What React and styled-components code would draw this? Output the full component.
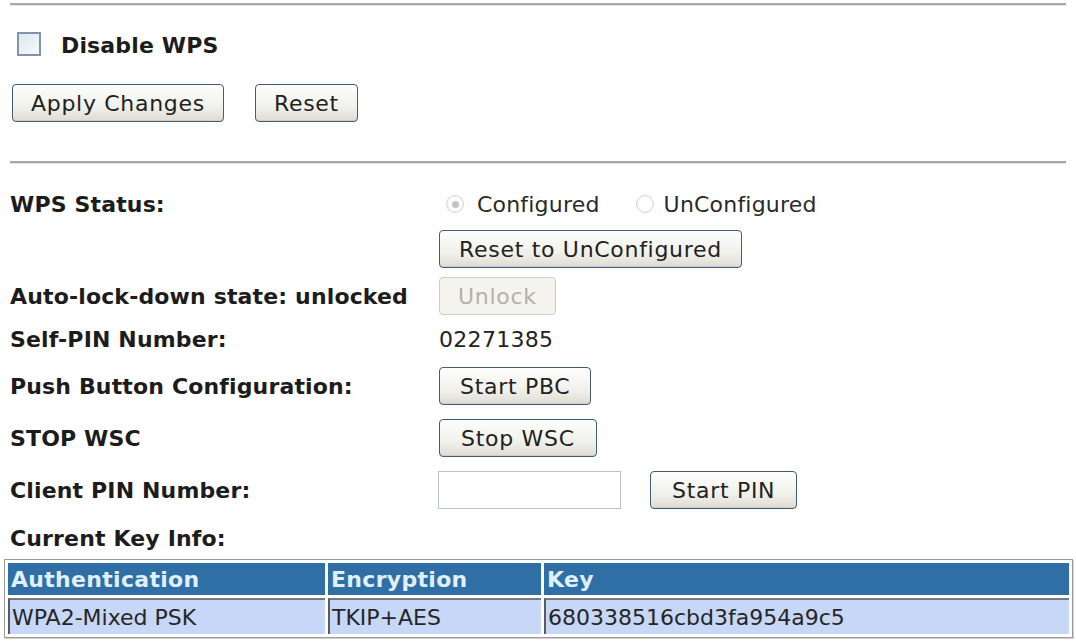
import React from "react";
import styled, { createGlobalStyle, css } from "styled-components";

const GlobalStyle = createGlobalStyle`
  html, body {
    margin: 0;
    padding: 0;
    background: #ffffff;
  }
  body {
    font-family: "DejaVu Sans", Verdana, sans-serif;
    color: #1e1e1e;
  }
`;

const Page = styled.div`
  width: 1076px;
  height: 643px;
  padding: 3px 4px 0 4px;
  box-sizing: border-box;
  overflow: hidden;
`;

const Rule = styled.div`
  height: 2px;
  margin: 0 6px;
  background: #a8a8a8;
  border-bottom: 1px solid #e2e2e2;
  margin-top: ${(props) => props.$top || 0}px;
`;

const CheckRow = styled.div`
  display: flex;
  align-items: center;
  height: 78px;
  padding-left: 13px;
  gap: 20px;
`;

const CheckBox = styled.span`
  width: 20px;
  height: 20px;
  border: 2px solid #7f93ad;
  background: linear-gradient(135deg, #dfe6ee, #f7f9fb);
  box-sizing: content-box;
  margin-top: -2px;
`;

const BoldText = styled.span`
  font-weight: bold;
  font-size: 22px;
  letter-spacing: 0.15px;
  color: #1c1c1c;
  white-space: nowrap;
`;

const ButtonRow = styled.div`
  display: flex;
  align-items: center;
  gap: 31px;
  padding-left: 8px;
  height: 38px;
`;

const Button = styled.button`
  height: 38px;
  padding: 0 ${(props) => props.$pad || 18}px;
  font-family: "DejaVu Sans", Verdana, sans-serif;
  font-size: 22px;
  letter-spacing: 0.7px;
  color: #222;
  border: 1.5px solid #445c78;
  border-radius: 4px;
  background: linear-gradient(#fdfdfb 0%, #f1f1ec 60%, #dedcd3 100%);
  box-shadow: inset 0 -1px 0 #cfcdc4;
  white-space: nowrap;
  cursor: pointer;
  ${(props) =>
    props.disabled &&
    css`
      color: #b4b1a6;
      border-color: #cfcdc2;
      background: #f4f3ee;
      box-shadow: none;
      cursor: default;
    `}
`;

const Form = styled.div`
  display: flex;
  flex-direction: column;
  margin-top: 19px;
  padding-left: 6px;
`;

const Row = styled.div`
  display: grid;
  grid-template-columns: 429px 1fr;
  align-items: center;
  height: ${(props) => props.$h}px;
`;

const Value = styled.div`
  display: flex;
  align-items: center;
  font-size: 22px;
  letter-spacing: 0.3px;
  color: #222;
`;

const RadioLabel = styled.label`
  display: flex;
  align-items: center;
  gap: ${(props) => props.$gap || 12}px;
  font-size: 22px;
  letter-spacing: 0.2px;
  color: #2a2a2a;
  margin-left: ${(props) => props.$left || 0}px;
`;

const Radio = styled.span`
  width: 16px;
  height: 16px;
  border-radius: 50%;
  border: 1px solid #d4d4d4;
  background: radial-gradient(circle, #ffffff 40%, #eeeeee 100%);
  display: flex;
  align-items: center;
  justify-content: center;
  &::after {
    content: "";
    display: ${(props) => (props.$checked ? "block" : "none")};
    width: 7px;
    height: 7px;
    border-radius: 50%;
    background: #c4c4c4;
  }
`;

const PinInput = styled.input`
  width: 183px;
  height: 38px;
  box-sizing: border-box;
  border: 1px solid #b9c2cf;
  background: #fff;
  margin-left: -1px;
  margin-right: 29px;
`;

const KeyTitle = styled.div`
  height: 42px;
  display: flex;
  align-items: center;
  padding-left: 6px;
`;

const KeyTable = styled.table`
  width: 1069px;
  border-collapse: separate;
  border-spacing: 3px;
  border: 1px solid #9c9c9c;
  box-shadow: 1px 1px 0 #cfcfcf;
  font-size: 22px;
`;

const Head = styled.th`
  background: #306fa6;
  color: #dff0ff;
  font-weight: bold;
  text-align: left;
  height: 32px;
  padding: 0 3px;
  letter-spacing: 0.3px;
  width: ${(props) => props.$w}px;
  white-space: nowrap;
`;

const Cell = styled.td`
  background: #c7d7f7;
  color: #262626;
  height: 36px;
  padding: 0 2px;
  border-left: 2px solid #5a5a5a;
  border-top: 2px solid #7a7a7a;
  box-sizing: border-box;
  white-space: nowrap;
`;

const statusRows = [
  { label: "Push Button Configuration:", button: "Start PBC", h: 54, pad: 20 },
  { label: "STOP WSC", button: "Stop WSC", h: 50, pad: 21 },
];

export default function App() {
  return (
    <>
      <GlobalStyle />
      <Page>
        <Rule />
        <CheckRow>
          <CheckBox />
          <BoldText>Disable WPS</BoldText>
        </CheckRow>
        <ButtonRow>
          <Button $pad={18}>Apply Changes</Button>
          <Button $pad={18}>Reset</Button>
        </ButtonRow>
        <Rule $top={39} />

        <Form>
          <Row $h={42}>
            <BoldText>WPS Status:</BoldText>
            <Value>
              <RadioLabel $left={7} $gap={13}>
                <Radio $checked />
                Configured
              </RadioLabel>
              <RadioLabel $left={36} $gap={10}>
                <Radio />
                UnConfigured
              </RadioLabel>
            </Value>
          </Row>
          <Row $h={48}>
            <span />
            <Value>
              <Button $pad={19}>Reset to UnConfigured</Button>
            </Value>
          </Row>
          <Row $h={46}>
            <BoldText>Auto-lock-down state: unlocked</BoldText>
            <Value>
              <Button disabled $pad={18}>
                Unlock
              </Button>
            </Value>
          </Row>
          <Row $h={40}>
            <BoldText>Self-PIN Number:</BoldText>
            <Value>02271385</Value>
          </Row>
          {statusRows.map((r) => (
            <Row $h={r.h} key={r.label}>
              <BoldText>{r.label}</BoldText>
              <Value>
                <Button $pad={r.pad}>{r.button}</Button>
              </Value>
            </Row>
          ))}
          <Row $h={54}>
            <BoldText>Client PIN Number:</BoldText>
            <Value>
              <PinInput type="text" />
              <Button $pad={21}>Start PIN</Button>
            </Value>
          </Row>
        </Form>

        <KeyTitle>
          <BoldText>Current Key Info:</BoldText>
        </KeyTitle>
        <KeyTable>
          <thead>
            <tr>
              <Head $w={311}>Authentication</Head>
              <Head $w={207}>Encryption</Head>
              <Head>Key</Head>
            </tr>
          </thead>
          <tbody>
            <tr>
              <Cell>WPA2-Mixed PSK</Cell>
              <Cell>TKIP+AES</Cell>
              <Cell>680338516cbd3fa954a9c5</Cell>
            </tr>
          </tbody>
        </KeyTable>
      </Page>
    </>
  );
}
